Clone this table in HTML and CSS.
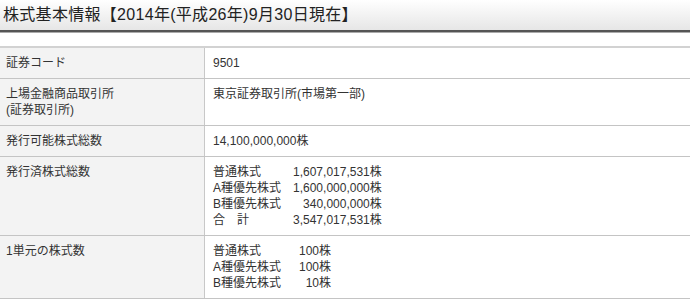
FILE: index.html
```html
<!DOCTYPE html>
<html lang="ja">
<head>
<meta charset="utf-8">
<link rel="stylesheet" href="styles.css">
</head>
<body>
<h2 class="title">株式基本情報【2014年(平成26年)9月30日現在】</h2>
<table class="info">
  <tr>
    <th>証券コード</th>
    <td>9501</td>
  </tr>
  <tr>
    <th>上場金融商品取引所<br>(証券取引所)</th>
    <td>東京証券取引所(市場第一部)</td>
  </tr>
  <tr>
    <th>発行可能株式総数</th>
    <td>14,100,000,000株</td>
  </tr>
  <tr>
    <th>発行済株式総数</th>
    <td>
      <table class="sub sub-a">
        <tr><td class="k">普通株式</td><td class="v">1,607,017,531株</td></tr>
        <tr><td class="k">A種優先株式</td><td class="v">1,600,000,000株</td></tr>
        <tr><td class="k">B種優先株式</td><td class="v">340,000,000株</td></tr>
        <tr><td class="k">合　計</td><td class="v">3,547,017,531株</td></tr>
      </table>
    </td>
  </tr>
  <tr>
    <th>1単元の株式数</th>
    <td>
      <table class="sub sub-b">
        <tr><td class="k">普通株式</td><td class="v">100株</td></tr>
        <tr><td class="k">A種優先株式</td><td class="v">100株</td></tr>
        <tr><td class="k">B種優先株式</td><td class="v">10株</td></tr>
      </table>
    </td>
  </tr>
</table>
</body>
</html>
```
FILE: styles.css
```css
html, body {
  margin: 0;
  padding: 0;
  background: #fff;
}
body {
  font-family: "Liberation Sans", "Noto Sans CJK JP", sans-serif;
  color: #333;
  font-size: 12px;
  line-height: 16px;
}
.title {
  margin: 0;
  height: 30px;
  padding: 0 0 0 3px;
  font-size: 16px;
  font-weight: normal;
  line-height: 29px;
  letter-spacing: 0.3px;
  color: #222;
  background: linear-gradient(#ffffff, #e6e6e6);
  border-bottom: 2px solid #555;
  box-shadow: 0 1px 0 #aaa;
  white-space: nowrap;
}
.info {
  margin-top: 14px;
  width: 100%;
  border-collapse: collapse;
  border-top: 2px solid #d2d2d2;
}
.info > tbody > tr > th,
.info > tbody > tr > td {
  border-bottom: 1px solid #c4c4c4;
  padding: 7px 6px;
  text-align: left;
  vertical-align: top;
  font-weight: normal;
}
.info > tbody > tr > th {
  width: 192px;
  background: #f3f3f3;
  border-right: 1px solid #c8c8c8;
}
.info > tbody > tr > td {
  padding-left: 8px;
}
.sub {
  border-collapse: collapse;
}
.sub td {
  padding: 0;
}
.sub .v {
  text-align: right;
}
.sub-a .k { padding-right: 12px; }
.sub-b .k { padding-right: 18px; }
```
